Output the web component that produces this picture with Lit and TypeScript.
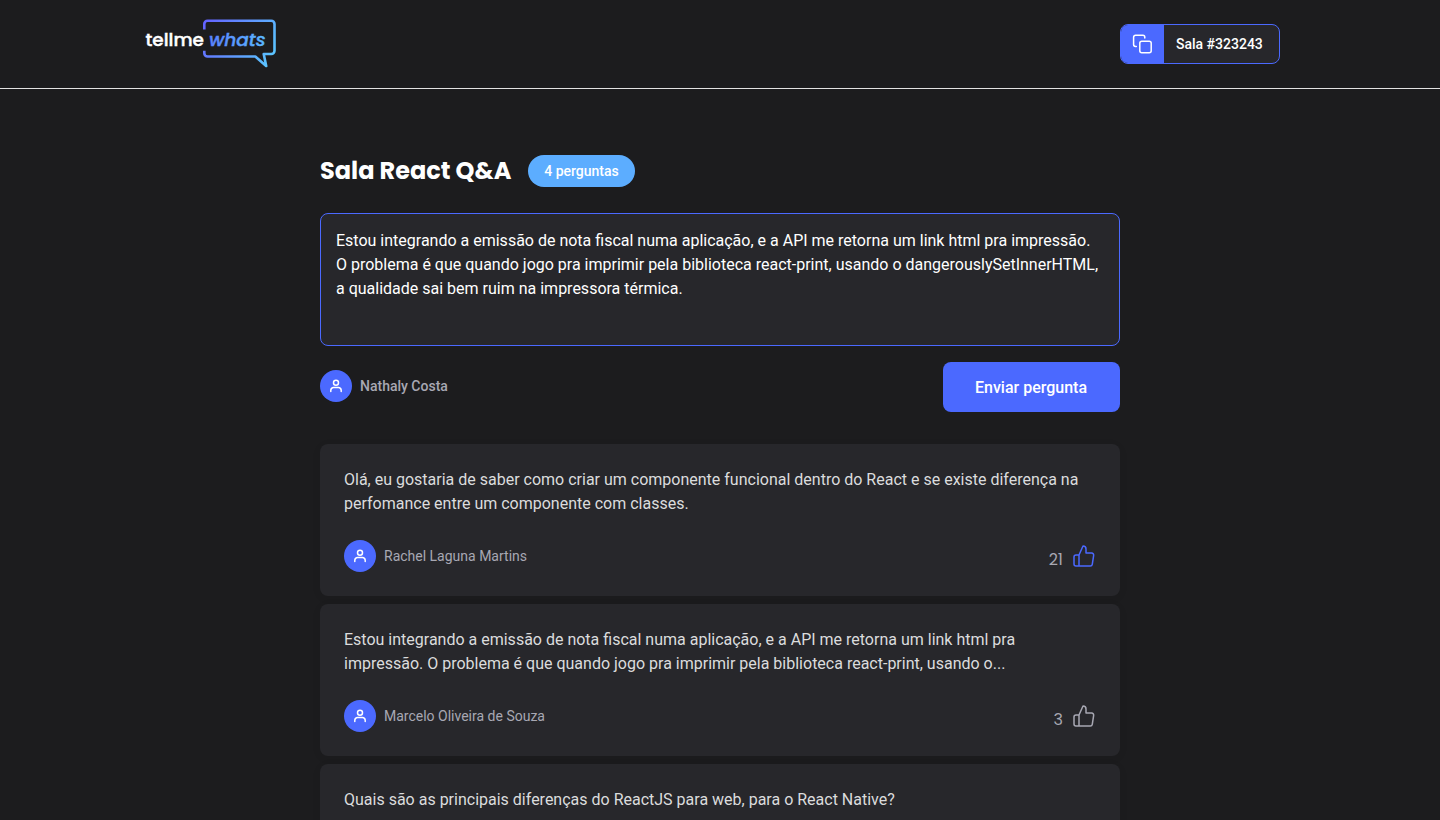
import { LitElement, html, css } from "lit";
import { customElement, property } from "lit/decorators.js";

const userIcon = html`<svg width="16" height="16" viewBox="0 0 16 16" fill="none" stroke="#fff" stroke-width="1.5" stroke-linecap="round" stroke-linejoin="round">
  <circle cx="8" cy="4.7" r="2.5"></circle>
  <path d="M2.8 13.6V12.3a2.7 2.7 0 0 1 2.7-2.7h5a2.7 2.7 0 0 1 2.7 2.7v1.3"></path>
</svg>`;

@customElement("user-info")
class UserInfo extends LitElement {
  @property() name = "";
  @property({ type: Boolean, reflect: true }) strong = false;
  static styles = css`
    :host { display: flex; align-items: center; gap: 8px; color: #a8a8b3; font: 400 14px/16px Roboto, sans-serif; }
    :host([strong]) { font-weight: 500; }
    .avatar { width: 32px; height: 32px; border-radius: 50%; background: #4b69ff; display: grid; place-items: center; }
  `;
  render() {
    return html`<span class="avatar">${userIcon}</span><span>${this.name}</span>`;
  }
}

@customElement("question-card")
class QuestionCard extends LitElement {
  @property({ attribute: false }) lines: string[] = [];
  @property() author = "";
  @property({ type: Number }) likes = 0;
  @property({ type: Boolean, reflect: true }) liked = false;
  static styles = css`
    :host { display: block; box-sizing: border-box; padding: 24px; border-radius: 8px; background: #27272b; color: #dbdcdd; box-shadow: 0 2px 12px rgba(0, 0, 0, 0.04); }
    p { margin: 0; font: 400 16px/24px Roboto, sans-serif; white-space: nowrap; }
    footer { display: flex; justify-content: space-between; align-items: center; margin-top: 24px; height: 32px; }
    .like { display: flex; align-items: center; gap: 9px; height: 24px; color: #a8a8b3; }
    .count { font: 400 16px/24px Poppins, Inter, sans-serif; padding-top: 8px; }
    svg { display: block; }
    :host([liked]) svg { color: #4b69ff; }
  `;
  render() {
    return html`
      <p>${this.lines.map((l, i) => html`${i ? html`<br />` : ""}${l}`)}</p>
      ${this.author
        ? html`<footer>
            <user-info name=${this.author}></user-info>
            <div class="like">
              <span class="count">${this.likes}</span>
              <svg width="24" height="24" viewBox="0 0 24 24" fill="none" stroke="currentColor" stroke-width="1.5" stroke-linecap="round" stroke-linejoin="round">
                <path d="M7 22H4a2 2 0 0 1-2-2v-7a2 2 0 0 1 2-2h3m7-2V5a3 3 0 0 0-3-3L7 11v11h11.28a2 2 0 0 0 2-1.7l1.38-9a2 2 0 0 0-2-2.3H14z"></path>
              </svg>
            </div>
          </footer>`
        : html`<footer></footer>`}`;
  }
}

@customElement("app-root")
class AppRoot extends LitElement {
  static styles = css`
    :host { display: block; height: 820px; overflow: hidden; background: #1c1c1e; color: #fff; font-family: Roboto, sans-serif; }
    .top { box-sizing: border-box; height: 89px; padding: 0 160px 0 144px; border-bottom: 1px solid #e2e2e2; display: flex; justify-content: space-between; align-items: center; }
    .logo { display: block; }
    .logo text { font-family: Poppins, Inter, sans-serif; font-size: 18px; font-weight: 500; stroke-width: 0.4; }
    .slant { font-style: italic; }
    .code { box-sizing: border-box; width: 160px; height: 40px; border: 1px solid #4b69ff; border-radius: 8px; background: #27272b; display: flex; overflow: hidden; }
    .copy { width: 43px; background: #4b69ff; display: grid; place-items: center; }
    .room { flex: 1; padding-left: 12px; font: 500 14px/38px Roboto, sans-serif; }
    main { width: 800px; margin: 0 auto; padding-top: 66px; }
    .title { display: flex; align-items: center; gap: 16px; height: 32px; }
    h1 { margin: 0; width: 192px; font: 700 24px/32px Poppins, Inter, sans-serif; white-space: nowrap; }
    .badge { width: 107px; border-radius: 16px; background: #5cadff; text-align: center; font: 500 14px/32px Roboto, sans-serif; }
    .input { box-sizing: border-box; height: 133px; margin-top: 26px; padding: 15px; border: 1px solid #4b69ff; border-radius: 8px; background: #27272b; font-size: 16px; line-height: 24px; white-space: nowrap; }
    .actions { display: flex; justify-content: space-between; align-items: center; height: 50px; margin-top: 16px; }
    .actions user-info { margin-bottom: 2px; }
    button { box-sizing: border-box; width: 177px; height: 50px; padding: 2px 1px 0 0; border: 0; border-radius: 8px; background: #4b69ff; color: #fff; font: 500 16px/48px Roboto, sans-serif; }
    .list { display: grid; gap: 8px; margin-top: 32px; }
  `;
  render() {
    return html`
      <header class="top">
        <svg class="logo" width="136" height="60" viewBox="144 14 136 60">
          <defs>
            <linearGradient id="edge" gradientUnits="userSpaceOnUse" x1="204" y1="20" x2="276" y2="62">
              <stop offset="0" stop-color="#6461ff"></stop><stop offset="1" stop-color="#5acbff"></stop>
            </linearGradient>
            <linearGradient id="word" gradientUnits="userSpaceOnUse" x1="209" y1="40" x2="266" y2="40">
              <stop offset="0" stop-color="#5a82ff"></stop><stop offset="1" stop-color="#5ab8ff"></stop>
            </linearGradient>
          </defs>
          <path fill="none" stroke="url(#edge)" stroke-width="2.6" stroke-linejoin="round" d="M204.3 29.5V24a3.2 3.2 0 0 1 3.2-3.2H271.3a3.2 3.2 0 0 1 3.2 3.2V50.8a3.2 3.2 0 0 1-3.2 3.2H263.7L266.2 66L255.3 56.5H207.5a3.2 3.2 0 0 1-3.2-3.2V50.8"></path>
          <text x="145.5" y="46" fill="#fff" stroke="#fff" textLength="58.5" lengthAdjust="spacingAndGlyphs">tellme</text>
          <text class="slant" x="209" y="46" fill="url(#word)" stroke="url(#word)" textLength="56.5" lengthAdjust="spacingAndGlyphs">whats</text>
        </svg>
        <div class="code">
          <span class="copy">
            <svg width="22" height="20" viewBox="0 0 22 20" fill="none" stroke="#fff" stroke-width="1.5" stroke-linecap="round" stroke-linejoin="round">
              <rect x="7.8" y="7.3" width="11.4" height="11.4" rx="2"></rect>
              <path d="M4.3 12.5H3.5a1.9 1.9 0 0 1-1.9-1.9V3.2a1.9 1.9 0 0 1 1.9-1.9h7.4a1.9 1.9 0 0 1 1.9 1.9V4"></path>
            </svg>
          </span>
          <span class="room">Sala #323243</span>
        </div>
      </header>
      <main>
        <div class="title"><h1>Sala React Q&amp;A</h1><span class="badge">4 perguntas</span></div>
        <div class="input">Estou integrando a emissão de nota fiscal numa aplicação, e a API me retorna um link html pra impressão.<br />O problema é que quando jogo pra imprimir pela biblioteca react-print, usando o dangerouslySetInnerHTML,<br />a qualidade sai bem ruim na impressora térmica.</div>
        <div class="actions">
          <user-info strong name="Nathaly Costa"></user-info>
          <button>Enviar pergunta</button>
        </div>
        <div class="list">
          <question-card liked author="Rachel Laguna Martins" likes="21" .lines=${["Olá, eu gostaria de saber como criar um componente funcional dentro do React e se existe diferença na", "perfomance entre um componente com classes."]}></question-card>
          <question-card author="Marcelo Oliveira de Souza" likes="3" .lines=${["Estou integrando a emissão de nota fiscal numa aplicação, e a API me retorna um link html pra", "impressão. O problema é que quando jogo pra imprimir pela biblioteca react-print, usando o..."]}></question-card>
          <question-card .lines=${["Quais são as principais diferenças do ReactJS para web, para o React Native?"]}></question-card>
        </div>
      </main>`;
  }
}
